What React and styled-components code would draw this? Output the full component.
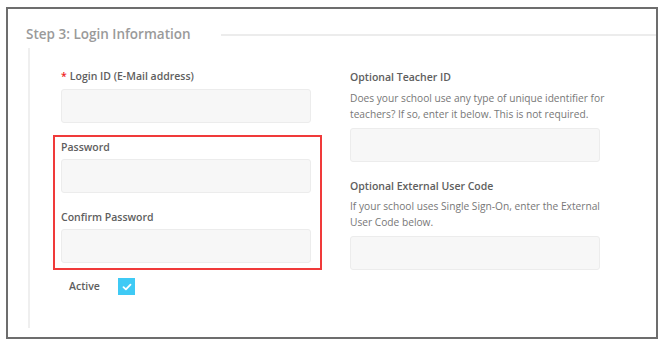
import React from "react";
import styled, { createGlobalStyle } from "styled-components";

const Global = createGlobalStyle`
  html, body { margin: 0; padding: 0; background: #fff; }
  body { font-family: "Open Sans", "Liberation Sans", sans-serif; }
  * { box-sizing: border-box; }
`;

const Frame = styled.div`
  margin: 7px 0 0 6px;
  width: 652px;
  height: 332px;
  border: 2px solid #6d6d6d;
  background: #fff;
`;

const Legend = styled.div`
  display: flex;
  align-items: center;
  height: 20px;
  margin-top: 15px;
  padding-left: 18px;
`;

const Heading = styled.h3`
  margin: 0;
  font-size: 13.5px;
  font-weight: 600;
  color: #9a9a9a;
  line-height: 20px;
  white-space: nowrap;
`;

const Rule = styled.div`
  flex: 1;
  height: 2px;
  margin-left: 30px;
  margin-top: 2px;
  background: #ececec;
`;

const Body = styled.div`
  margin: 4px 0 0 20px;
  height: 280px;
  border-left: 2px solid #efefef;
  padding-left: 23px;
  display: grid;
  grid-template-columns: 269px 1fr;
  column-gap: 28px;
  align-items: start;
`;

const Column = styled.div`
  display: flex;
  flex-direction: column;
`;

const Field = styled.div`
  display: flex;
  flex-direction: column;
  padding-left: ${(p) => p.$indent || 0}px;
  margin-top: ${(p) => p.$top || 0}px;
`;

const Label = styled.label`
  font-size: 10.5px;
  font-weight: 600;
  color: #5e5e5e;
  line-height: 15px;
  white-space: nowrap;
  margin-bottom: ${(p) => (p.$gap === undefined ? 7 : p.$gap)}px;
`;

const Star = styled.span`
  color: #e22;
  margin-right: 3px;
`;

const Hint = styled.p`
  margin: 0 0 6px;
  font-size: 10.2px;
  color: #777;
  line-height: 16px;
  white-space: nowrap;
`;

const Input = styled.input`
  width: 250px;
  height: 34px;
  border: 1px solid #ececec;
  border-radius: 3px;
  background: #f7f7f7;
  outline: none;
  padding: 0 8px;
  font-family: inherit;
`;

const RedBox = styled.div`
  margin-top: 12px;
  border: 2px solid #f03a3a;
  padding: 3px 9px 5px 6px;
  display: flex;
  flex-direction: column;
`;

const ActiveRow = styled.div`
  display: flex;
  align-items: center;
  margin-top: 8px;
  padding-left: 16px;
  height: 17px;
`;

const ActiveLabel = styled.span`
  font-size: 10.5px;
  font-weight: 600;
  color: #5e5e5e;
  width: 49px;
  margin-top: -1px;
`;

const Check = styled.span`
  width: 17px;
  height: 17px;
  background: #3fcaf5;
  display: inline-flex;
  align-items: center;
  justify-content: center;
`;

export default function App() {
  return (
    <>
      <Global />
      <Frame>
        <Legend>
          <Heading>Step 3: Login Information</Heading>
          <Rule />
        </Legend>
        <Body>
          <Column>
            <Field $indent={8} $top={21}>
              <Label $gap={5}>
                <Star>*</Star>Login ID (E-Mail address)
              </Label>
              <Input />
            </Field>
            <RedBox>
              <Field>
                <Label $gap={4}>Password</Label>
                <Input type="password" />
              </Field>
              <Field $top={17}>
                <Label $gap={4}>Confirm Password</Label>
                <Input type="password" />
              </Field>
            </RedBox>
            <ActiveRow>
              <ActiveLabel>Active</ActiveLabel>
              <Check>
                <svg width="10" height="8" viewBox="0 0 10 8">
                  <path d="M1.5 4.2 L3.9 6.4 L8.5 1.6" fill="none" stroke="#fff" strokeWidth="1.8" strokeLinecap="round" strokeLinejoin="round" />
                </svg>
              </Check>
            </ActiveRow>
          </Column>
          <Column>
            <Field $top={22}>
              <Label $gap={5}>Optional Teacher ID</Label>
              <Hint>
                Does your school use any type of unique identifier for
                <br />
                teachers? If so, enter it below. This is not required.
              </Hint>
              <Input />
            </Field>
            <Field $top={17}>
              <Label $gap={4}>Optional External User Code</Label>
              <Hint>
                If your school uses Single Sign-On, enter the External
                <br />
                User Code below.
              </Hint>
              <Input />
            </Field>
          </Column>
        </Body>
      </Frame>
    </>
  );
}
